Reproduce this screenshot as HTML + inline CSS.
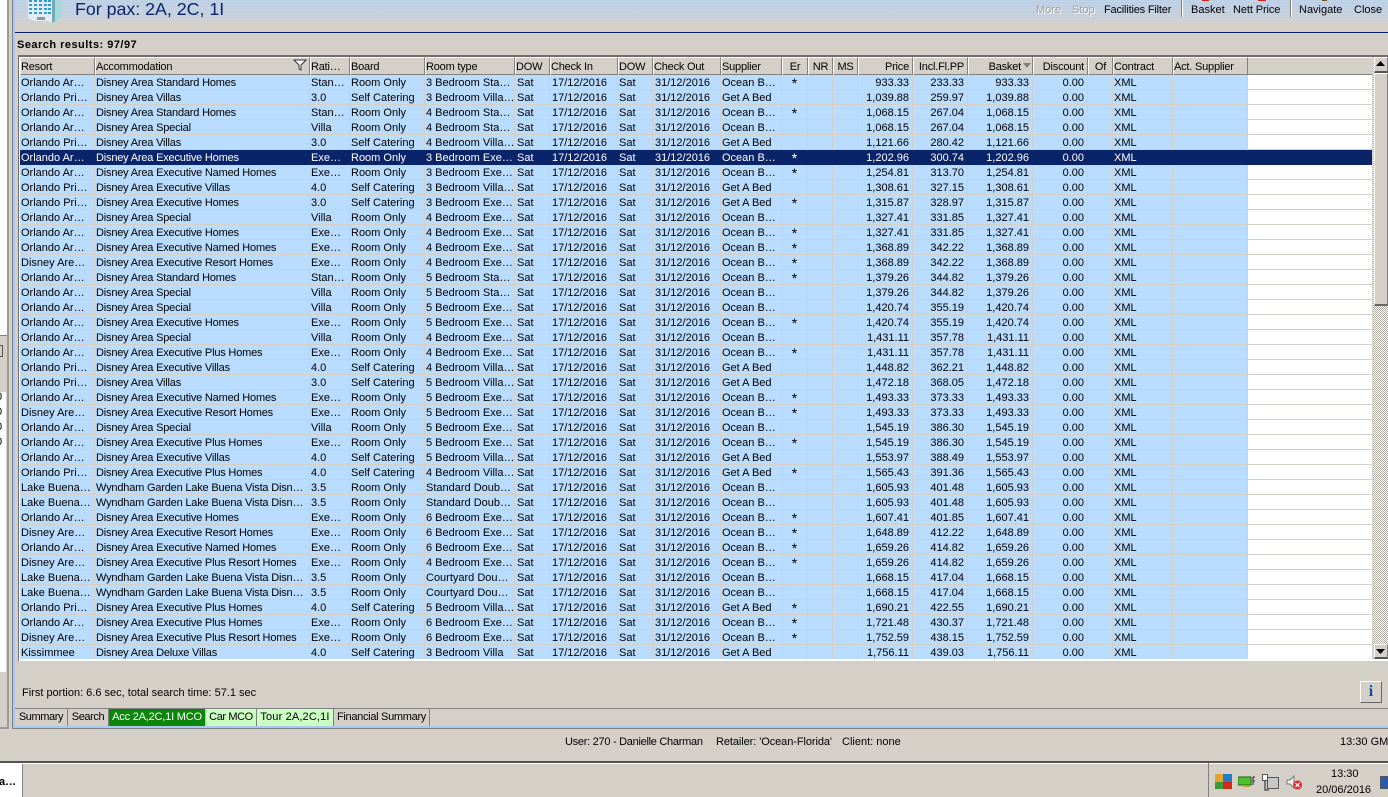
<!DOCTYPE html>
<html><head><meta charset="utf-8">
<style>
html,body{margin:0;padding:0;width:1388px;height:797px;overflow:hidden;background:#d4d0c8;font:11px "Liberation Sans",sans-serif;color:#000}
.a{position:absolute;white-space:nowrap}
table{position:absolute;left:20px;top:57px;border-collapse:separate;border-spacing:0;table-layout:fixed;width:1352px}
th{height:14px;padding:2px 0 0 0;background:#d4d0c8;font-weight:normal;text-align:left;border-top:1px solid #fff;border-left:1px solid #fff;border-right:1px solid #808080;border-bottom:1px solid #808080;overflow:hidden;white-space:nowrap;line-height:14px;letter-spacing:-.2px}
td{height:12px;padding:2px 0 0 1px;background:#b9dcff;border-right:1px solid #d4d0c8;border-bottom:1px solid #d4d0c8;overflow:hidden;white-space:nowrap;line-height:12px}
td:nth-child(2){letter-spacing:-.19px}
td:nth-child(6),td:nth-child(7),td:nth-child(9){padding-left:2px}
td:nth-child(n+14):nth-child(-n+17){text-align:right;padding:2px 3px 0 0}
th:nth-child(n+14):nth-child(-n+17){text-align:right;padding:2px 3px 0 0}
th:nth-child(16):nth-child(16):nth-child(16){padding-right:11px}
th:nth-child(n+11):nth-child(-n+13),th:nth-child(18),td:nth-child(n+11):nth-child(-n+13){text-align:center;padding:2px 0 0 0}
td:nth-child(11){font-size:14px}
td:last-child{background:#fff;border-right:0}
th:last-child{border-right:0;border-left:0}
tr.s td{background:#0a246a;color:#fff;border-color:#0a246a}
tr:last-child td{border-bottom:0}
.t{position:absolute;top:709px;height:17px;line-height:17px;text-align:center;border-right:1px solid #808080;box-sizing:border-box}
</style></head><body>

<!-- left strip -->
<div class="a" style="left:0;top:0;width:7px;height:335px;background:#fff"></div>
<div class="a" style="left:0;top:335px;width:7px;height:1px;background:#808080"></div>
<div class="a" style="left:0;top:345px;width:2px;height:10px;border:1px solid #555;border-left:0"></div>
<div class="a" style="left:0;top:392px;width:6px;height:280px;background:#fff"></div>
<div class="a" style="left:-4px;top:390px;line-height:15px;white-space:pre">0
0
0
0</div>
<div class="a" style="left:7px;top:0;width:2px;height:729px;background:#9a9a9a"></div>
<div class="a" style="left:0;top:727px;width:9px;height:2px;background:#9a9a9a"></div>
<div class="a" style="left:12px;top:0;width:1px;height:729px;background:#808080"></div>
<div class="a" style="left:13px;top:0;width:2px;height:727px;background:#a6caf0"></div>
<div class="a" style="left:13px;top:726px;width:1375px;height:2px;background:#a6caf0"></div>
<div class="a" style="left:12px;top:728px;width:1376px;height:1px;background:#808080"></div>

<!-- header band -->
<div class="a" style="left:15px;top:0;width:1373px;height:32px;background:repeating-linear-gradient(0deg,rgba(255,255,255,.05) 0 1px,rgba(0,0,0,0) 1px 3px),linear-gradient(#bcd0e6,#c6d0dc 50%,#d4d0c8 75%)"></div>
<div class="a" style="left:15px;top:32px;width:1373px;height:1px;background:#0a246a"></div>

<!-- building icon -->
<svg class="a" style="left:26px;top:0" width="38" height="24" viewBox="0 0 38 24">
<path d="M2 0H26V23L22 21H8L2 18Z" fill="#e2ecf2"/>
<path d="M26 0H36V17L26 23Z" fill="#a6d8de"/>
<path d="M26 0H29V21L26 23Z" fill="#74aab8"/>
<path d="M11 17H19V20H11Z" fill="#8a9aa2"/>
<g fill="#2a9be0">
<rect x="3" y="0" width="3" height="2"/><rect x="8" y="0" width="3" height="2"/><rect x="13" y="0" width="3" height="2"/><rect x="18" y="0" width="3" height="2"/><rect x="22" y="0" width="3" height="2"/>
<rect x="3" y="4" width="3" height="2"/><rect x="8" y="4" width="3" height="2"/><rect x="13" y="4" width="3" height="2"/><rect x="18" y="4" width="3" height="2"/><rect x="22" y="4" width="3" height="2"/>
<rect x="3" y="8" width="3" height="2"/><rect x="8" y="8" width="3" height="2"/><rect x="13" y="8" width="3" height="2"/><rect x="18" y="8" width="3" height="2"/><rect x="22" y="8" width="3" height="2"/>
<rect x="3" y="12" width="3" height="2"/><rect x="8" y="12" width="3" height="2"/><rect x="13" y="12" width="3" height="2"/><rect x="18" y="12" width="3" height="2"/><rect x="22" y="12" width="3" height="2"/>
</g></svg>

<div class="a" style="left:75px;top:-1px;font-size:17.8px;line-height:20px;color:#0a246a">For pax: 2A, 2C, 1I</div>

<!-- toolbar -->
<div class="a" style="left:1036px;top:4px;color:#a0a0a0;text-shadow:1px 1px 0 #fff">More</div>
<div class="a" style="left:1072px;top:4px;color:#a0a0a0;text-shadow:1px 1px 0 #fff">Stop</div>
<div class="a" style="left:1104px;top:4px;letter-spacing:-.18px">Facilities Filter</div>
<div class="a" style="left:1181px;top:0;width:1px;height:17px;background:#808080;border-right:1px solid #fff"></div>
<div class="a" style="left:1191px;top:4px">Basket</div>
<div class="a" style="left:1233px;top:4px;letter-spacing:-.1px">Nett Price</div>
<div class="a" style="left:1290px;top:0;width:1px;height:17px;background:#808080;border-right:1px solid #fff"></div>
<div class="a" style="left:1299px;top:4px">Navigate</div>
<div class="a" style="left:1354px;top:4px">Close</div>
<div class="a" style="left:1202px;top:0;width:7px;height:1px;background:#d02020"></div>
<div class="a" style="left:1258px;top:0;width:8px;height:1px;background:#d02020"></div>
<div class="a" style="left:1322px;top:0;width:5px;height:1px;background:#705030"></div>

<div class="a" style="left:17px;top:38px;font-weight:bold;line-height:14px;letter-spacing:.48px">Search results: 97/97</div>

<!-- grid frame -->
<div class="a" style="left:18px;top:55px;width:1370px;height:2px;background:#6f6f6f"></div>
<div class="a" style="left:18px;top:55px;width:1px;height:606px;background:#6f6f6f"></div>
<div class="a" style="left:19px;top:57px;width:1px;height:603px;background:#fff"></div>
<div class="a" style="left:19px;top:659px;width:1369px;height:2px;background:#fff"></div>

<table>
<colgroup><col style="width:75px"><col style="width:215px"><col style="width:40px"><col style="width:75px"><col style="width:90px"><col style="width:35px"><col style="width:68px"><col style="width:35px"><col style="width:68px"><col style="width:61px"><col style="width:26px"><col style="width:25px"><col style="width:25px"><col style="width:55px"><col style="width:55px"><col style="width:65px"><col style="width:55px"><col style="width:25px"><col style="width:60px"><col style="width:75px"><col></colgroup>
<tr><th>Resort<th>Accommodation<th>Rati…<th>Board<th>Room type<th>DOW<th>Check In<th>DOW<th>Check Out<th>Supplier<th>Er<th>NR<th>MS<th>Price<th>Incl.Fl.PP<th>Basket<th>Discount<th>Of<th>Contract<th>Act. Supplier<th></tr>
<tr><td>Orlando Ar…<td>Disney Area Standard Homes<td>Stan…<td>Room Only<td>3 Bedroom Sta…<td>Sat<td>17/12/2016<td>Sat<td>31/12/2016<td>Ocean B…<td>*<td><td><td>933.33<td>233.33<td>933.33<td>0.00<td><td>XML<td><td></tr>
<tr><td>Orlando Pri…<td>Disney Area Villas<td>3.0<td>Self Catering<td>3 Bedroom Villa…<td>Sat<td>17/12/2016<td>Sat<td>31/12/2016<td>Get A Bed<td><td><td><td>1,039.88<td>259.97<td>1,039.88<td>0.00<td><td>XML<td><td></tr>
<tr><td>Orlando Ar…<td>Disney Area Standard Homes<td>Stan…<td>Room Only<td>4 Bedroom Sta…<td>Sat<td>17/12/2016<td>Sat<td>31/12/2016<td>Ocean B…<td>*<td><td><td>1,068.15<td>267.04<td>1,068.15<td>0.00<td><td>XML<td><td></tr>
<tr><td>Orlando Ar…<td>Disney Area Special<td>Villa<td>Room Only<td>4 Bedroom Sta…<td>Sat<td>17/12/2016<td>Sat<td>31/12/2016<td>Ocean B…<td><td><td><td>1,068.15<td>267.04<td>1,068.15<td>0.00<td><td>XML<td><td></tr>
<tr><td>Orlando Pri…<td>Disney Area Villas<td>3.0<td>Self Catering<td>4 Bedroom Villa…<td>Sat<td>17/12/2016<td>Sat<td>31/12/2016<td>Get A Bed<td><td><td><td>1,121.66<td>280.42<td>1,121.66<td>0.00<td><td>XML<td><td></tr>
<tr class="s"><td>Orlando Ar…<td>Disney Area Executive Homes<td>Exe…<td>Room Only<td>3 Bedroom Exe…<td>Sat<td>17/12/2016<td>Sat<td>31/12/2016<td>Ocean B…<td>*<td><td><td>1,202.96<td>300.74<td>1,202.96<td>0.00<td><td>XML<td><td></tr>
<tr><td>Orlando Ar…<td>Disney Area Executive Named Homes<td>Exe…<td>Room Only<td>3 Bedroom Exe…<td>Sat<td>17/12/2016<td>Sat<td>31/12/2016<td>Ocean B…<td>*<td><td><td>1,254.81<td>313.70<td>1,254.81<td>0.00<td><td>XML<td><td></tr>
<tr><td>Orlando Pri…<td>Disney Area Executive Villas<td>4.0<td>Self Catering<td>3 Bedroom Villa…<td>Sat<td>17/12/2016<td>Sat<td>31/12/2016<td>Get A Bed<td><td><td><td>1,308.61<td>327.15<td>1,308.61<td>0.00<td><td>XML<td><td></tr>
<tr><td>Orlando Pri…<td>Disney Area Executive Homes<td>3.0<td>Self Catering<td>3 Bedroom Exe…<td>Sat<td>17/12/2016<td>Sat<td>31/12/2016<td>Get A Bed<td>*<td><td><td>1,315.87<td>328.97<td>1,315.87<td>0.00<td><td>XML<td><td></tr>
<tr><td>Orlando Ar…<td>Disney Area Special<td>Villa<td>Room Only<td>4 Bedroom Exe…<td>Sat<td>17/12/2016<td>Sat<td>31/12/2016<td>Ocean B…<td><td><td><td>1,327.41<td>331.85<td>1,327.41<td>0.00<td><td>XML<td><td></tr>
<tr><td>Orlando Ar…<td>Disney Area Executive Homes<td>Exe…<td>Room Only<td>4 Bedroom Exe…<td>Sat<td>17/12/2016<td>Sat<td>31/12/2016<td>Ocean B…<td>*<td><td><td>1,327.41<td>331.85<td>1,327.41<td>0.00<td><td>XML<td><td></tr>
<tr><td>Orlando Ar…<td>Disney Area Executive Named Homes<td>Exe…<td>Room Only<td>4 Bedroom Exe…<td>Sat<td>17/12/2016<td>Sat<td>31/12/2016<td>Ocean B…<td>*<td><td><td>1,368.89<td>342.22<td>1,368.89<td>0.00<td><td>XML<td><td></tr>
<tr><td>Disney Are…<td>Disney Area Executive Resort Homes<td>Exe…<td>Room Only<td>4 Bedroom Exe…<td>Sat<td>17/12/2016<td>Sat<td>31/12/2016<td>Ocean B…<td>*<td><td><td>1,368.89<td>342.22<td>1,368.89<td>0.00<td><td>XML<td><td></tr>
<tr><td>Orlando Ar…<td>Disney Area Standard Homes<td>Stan…<td>Room Only<td>5 Bedroom Sta…<td>Sat<td>17/12/2016<td>Sat<td>31/12/2016<td>Ocean B…<td>*<td><td><td>1,379.26<td>344.82<td>1,379.26<td>0.00<td><td>XML<td><td></tr>
<tr><td>Orlando Ar…<td>Disney Area Special<td>Villa<td>Room Only<td>5 Bedroom Sta…<td>Sat<td>17/12/2016<td>Sat<td>31/12/2016<td>Ocean B…<td><td><td><td>1,379.26<td>344.82<td>1,379.26<td>0.00<td><td>XML<td><td></tr>
<tr><td>Orlando Ar…<td>Disney Area Special<td>Villa<td>Room Only<td>5 Bedroom Exe…<td>Sat<td>17/12/2016<td>Sat<td>31/12/2016<td>Ocean B…<td><td><td><td>1,420.74<td>355.19<td>1,420.74<td>0.00<td><td>XML<td><td></tr>
<tr><td>Orlando Ar…<td>Disney Area Executive Homes<td>Exe…<td>Room Only<td>5 Bedroom Exe…<td>Sat<td>17/12/2016<td>Sat<td>31/12/2016<td>Ocean B…<td>*<td><td><td>1,420.74<td>355.19<td>1,420.74<td>0.00<td><td>XML<td><td></tr>
<tr><td>Orlando Ar…<td>Disney Area Special<td>Villa<td>Room Only<td>4 Bedroom Exe…<td>Sat<td>17/12/2016<td>Sat<td>31/12/2016<td>Ocean B…<td><td><td><td>1,431.11<td>357.78<td>1,431.11<td>0.00<td><td>XML<td><td></tr>
<tr><td>Orlando Ar…<td>Disney Area Executive Plus Homes<td>Exe…<td>Room Only<td>4 Bedroom Exe…<td>Sat<td>17/12/2016<td>Sat<td>31/12/2016<td>Ocean B…<td>*<td><td><td>1,431.11<td>357.78<td>1,431.11<td>0.00<td><td>XML<td><td></tr>
<tr><td>Orlando Pri…<td>Disney Area Executive Villas<td>4.0<td>Self Catering<td>4 Bedroom Villa…<td>Sat<td>17/12/2016<td>Sat<td>31/12/2016<td>Get A Bed<td><td><td><td>1,448.82<td>362.21<td>1,448.82<td>0.00<td><td>XML<td><td></tr>
<tr><td>Orlando Pri…<td>Disney Area Villas<td>3.0<td>Self Catering<td>5 Bedroom Villa…<td>Sat<td>17/12/2016<td>Sat<td>31/12/2016<td>Get A Bed<td><td><td><td>1,472.18<td>368.05<td>1,472.18<td>0.00<td><td>XML<td><td></tr>
<tr><td>Orlando Ar…<td>Disney Area Executive Named Homes<td>Exe…<td>Room Only<td>5 Bedroom Exe…<td>Sat<td>17/12/2016<td>Sat<td>31/12/2016<td>Ocean B…<td>*<td><td><td>1,493.33<td>373.33<td>1,493.33<td>0.00<td><td>XML<td><td></tr>
<tr><td>Disney Are…<td>Disney Area Executive Resort Homes<td>Exe…<td>Room Only<td>5 Bedroom Exe…<td>Sat<td>17/12/2016<td>Sat<td>31/12/2016<td>Ocean B…<td>*<td><td><td>1,493.33<td>373.33<td>1,493.33<td>0.00<td><td>XML<td><td></tr>
<tr><td>Orlando Ar…<td>Disney Area Special<td>Villa<td>Room Only<td>5 Bedroom Exe…<td>Sat<td>17/12/2016<td>Sat<td>31/12/2016<td>Ocean B…<td><td><td><td>1,545.19<td>386.30<td>1,545.19<td>0.00<td><td>XML<td><td></tr>
<tr><td>Orlando Ar…<td>Disney Area Executive Plus Homes<td>Exe…<td>Room Only<td>5 Bedroom Exe…<td>Sat<td>17/12/2016<td>Sat<td>31/12/2016<td>Ocean B…<td>*<td><td><td>1,545.19<td>386.30<td>1,545.19<td>0.00<td><td>XML<td><td></tr>
<tr><td>Orlando Ar…<td>Disney Area Executive Villas<td>4.0<td>Self Catering<td>5 Bedroom Villa…<td>Sat<td>17/12/2016<td>Sat<td>31/12/2016<td>Get A Bed<td><td><td><td>1,553.97<td>388.49<td>1,553.97<td>0.00<td><td>XML<td><td></tr>
<tr><td>Orlando Pri…<td>Disney Area Executive Plus Homes<td>4.0<td>Self Catering<td>4 Bedroom Villa…<td>Sat<td>17/12/2016<td>Sat<td>31/12/2016<td>Get A Bed<td>*<td><td><td>1,565.43<td>391.36<td>1,565.43<td>0.00<td><td>XML<td><td></tr>
<tr><td>Lake Buena…<td>Wyndham Garden Lake Buena Vista Disn…<td>3.5<td>Room Only<td>Standard Doub…<td>Sat<td>17/12/2016<td>Sat<td>31/12/2016<td>Ocean B…<td><td><td><td>1,605.93<td>401.48<td>1,605.93<td>0.00<td><td>XML<td><td></tr>
<tr><td>Lake Buena…<td>Wyndham Garden Lake Buena Vista Disn…<td>3.5<td>Room Only<td>Standard Doub…<td>Sat<td>17/12/2016<td>Sat<td>31/12/2016<td>Ocean B…<td><td><td><td>1,605.93<td>401.48<td>1,605.93<td>0.00<td><td>XML<td><td></tr>
<tr><td>Orlando Ar…<td>Disney Area Executive Homes<td>Exe…<td>Room Only<td>6 Bedroom Exe…<td>Sat<td>17/12/2016<td>Sat<td>31/12/2016<td>Ocean B…<td>*<td><td><td>1,607.41<td>401.85<td>1,607.41<td>0.00<td><td>XML<td><td></tr>
<tr><td>Disney Are…<td>Disney Area Executive Resort Homes<td>Exe…<td>Room Only<td>6 Bedroom Exe…<td>Sat<td>17/12/2016<td>Sat<td>31/12/2016<td>Ocean B…<td>*<td><td><td>1,648.89<td>412.22<td>1,648.89<td>0.00<td><td>XML<td><td></tr>
<tr><td>Orlando Ar…<td>Disney Area Executive Named Homes<td>Exe…<td>Room Only<td>6 Bedroom Exe…<td>Sat<td>17/12/2016<td>Sat<td>31/12/2016<td>Ocean B…<td>*<td><td><td>1,659.26<td>414.82<td>1,659.26<td>0.00<td><td>XML<td><td></tr>
<tr><td>Disney Are…<td>Disney Area Executive Plus Resort Homes<td>Exe…<td>Room Only<td>4 Bedroom Exe…<td>Sat<td>17/12/2016<td>Sat<td>31/12/2016<td>Ocean B…<td>*<td><td><td>1,659.26<td>414.82<td>1,659.26<td>0.00<td><td>XML<td><td></tr>
<tr><td>Lake Buena…<td>Wyndham Garden Lake Buena Vista Disn…<td>3.5<td>Room Only<td>Courtyard Dou…<td>Sat<td>17/12/2016<td>Sat<td>31/12/2016<td>Ocean B…<td><td><td><td>1,668.15<td>417.04<td>1,668.15<td>0.00<td><td>XML<td><td></tr>
<tr><td>Lake Buena…<td>Wyndham Garden Lake Buena Vista Disn…<td>3.5<td>Room Only<td>Courtyard Dou…<td>Sat<td>17/12/2016<td>Sat<td>31/12/2016<td>Ocean B…<td><td><td><td>1,668.15<td>417.04<td>1,668.15<td>0.00<td><td>XML<td><td></tr>
<tr><td>Orlando Pri…<td>Disney Area Executive Plus Homes<td>4.0<td>Self Catering<td>5 Bedroom Villa…<td>Sat<td>17/12/2016<td>Sat<td>31/12/2016<td>Get A Bed<td>*<td><td><td>1,690.21<td>422.55<td>1,690.21<td>0.00<td><td>XML<td><td></tr>
<tr><td>Orlando Ar…<td>Disney Area Executive Plus Homes<td>Exe…<td>Room Only<td>6 Bedroom Exe…<td>Sat<td>17/12/2016<td>Sat<td>31/12/2016<td>Ocean B…<td>*<td><td><td>1,721.48<td>430.37<td>1,721.48<td>0.00<td><td>XML<td><td></tr>
<tr><td>Disney Are…<td>Disney Area Executive Plus Resort Homes<td>Exe…<td>Room Only<td>6 Bedroom Exe…<td>Sat<td>17/12/2016<td>Sat<td>31/12/2016<td>Ocean B…<td>*<td><td><td>1,752.59<td>438.15<td>1,752.59<td>0.00<td><td>XML<td><td></tr>
<tr><td>Kissimmee<td>Disney Area Deluxe Villas<td>4.0<td>Self Catering<td>3 Bedroom Villa<td>Sat<td>17/12/2016<td>Sat<td>31/12/2016<td>Get A Bed<td><td><td><td>1,756.11<td>439.03<td>1,756.11<td>0.00<td><td>XML<td><td></tr>
</table>

<!-- filter + sort icons -->
<svg class="a" style="left:293px;top:59px" width="14" height="12" viewBox="0 0 14 12"><path d="M1 1H13L8 6V11L6 10V6Z" fill="#fff" stroke="#333" stroke-width="1"/></svg>
<svg class="a" style="left:1023px;top:63px" width="8" height="5"><path d="M0 0H8L4 5Z" fill="#808080"/></svg>

<!-- scrollbar -->
<div class="a" style="left:1373px;top:57px;width:15px;height:588px;background:repeating-conic-gradient(#fff 0 25%,#b0aca4 0 50%) 0 0/2px 2px"></div>
<div class="a" style="left:1374px;top:57px;width:12px;height:13px;background:#d4d0c8;border:1px solid #fff;border-right-color:#808080;border-bottom:2px solid #555"></div>
<svg class="a" style="left:1376px;top:61px" width="9" height="6"><path d="M4.5 0L9 5H0Z" fill="#000"/></svg>
<div class="a" style="left:1374px;top:73px;width:12px;height:230px;background:#d4d0c8;border:1px solid #fff;border-right:2px solid #808080;border-bottom:2px solid #666"></div>
<div class="a" style="left:1374px;top:644px;width:12px;height:12px;background:#d4d0c8;border:1px solid #fff;border-right-color:#808080;border-bottom:2px solid #555"></div>
<svg class="a" style="left:1376px;top:649px" width="9" height="6"><path d="M0 0H9L4.5 5Z" fill="#000"/></svg>

<div class="a" style="left:22px;top:686px;line-height:14px">First portion: 6.6 sec, total search time: 57.1 sec</div>

<!-- info button -->
<div class="a" style="left:1360px;top:681px;width:20px;height:20px;background:#d4d0c8;border:1px solid #fff;border-right-color:#666;border-bottom-color:#666;text-align:center;font:bold 16px/20px 'Liberation Serif',serif;color:#0a50a0">i</div>

<!-- tabs -->
<div class="a" style="left:15px;top:708px;width:1373px;height:1px;background:#808080"></div>
<div class="t" style="left:15px;width:53px;letter-spacing:-.4px">Summary</div>
<div class="t" style="left:68px;width:41px;letter-spacing:-.4px">Search</div>
<div class="t" style="left:109px;width:97px;background:#0b860b;color:#fff;border-right:1px solid #c0c0c0;letter-spacing:-.2px">Acc 2A,2C,1I MCO</div>
<div class="t" style="left:206px;width:51px;background:#ccffc4;letter-spacing:-.4px">Car MCO</div>
<div class="t" style="left:257px;width:77px;background:#ccffc4;letter-spacing:.15px">Tour 2A,2C,1I</div>
<div class="t" style="left:334px;width:96px;letter-spacing:-.3px">Financial Summary</div>

<!-- status -->
<div class="a" style="left:565px;top:735px;line-height:14px;letter-spacing:-.28px">User: 270 - Danielle Charman</div>
<div class="a" style="left:716px;top:735px;line-height:14px;letter-spacing:-.08px">Retailer: 'Ocean-Florida'</div>
<div class="a" style="left:842px;top:735px;line-height:14px">Client: none</div>
<div class="a" style="left:1340px;top:735px;line-height:14px">13:30 GMT</div>

<!-- taskbar -->
<div class="a" style="left:0;top:761px;width:1388px;height:2px;background:#555"></div>
<div class="a" style="left:0;top:763px;width:1388px;height:1px;background:#fff"></div>
<div class="a" style="left:0;top:764px;width:22px;height:33px;background:#fff;border-right:1px solid #888"></div>
<div class="a" style="left:-1px;top:775px;font-weight:bold;line-height:14px">a…</div>
<div class="a" style="left:1208px;top:763px;width:1px;height:34px;background:#808080"></div>

<svg class="a" style="left:1215px;top:774px" width="18" height="16" viewBox="0 0 18 16"><rect x="0" y="0" width="8" height="8" fill="#e8a030"/><rect x="8" y="0" width="9" height="8" fill="#1f80c8"/><rect x="0" y="8" width="8" height="7" fill="#3c9a3c"/><rect x="8" y="8" width="9" height="7" fill="#d02a1a"/></svg>
<svg class="a" style="left:1238px;top:776px" width="18" height="12" viewBox="0 0 18 12"><rect x="0" y="1" width="13" height="8" fill="#50c030" stroke="#206010"/><rect x="5" y="9" width="7" height="2" fill="#c0a020"/><path d="M15 1H17M15 1V9M15 5H17" stroke="#222" fill="none"/></svg>
<svg class="a" style="left:1262px;top:774px" width="18" height="17" viewBox="0 0 18 17"><rect x="5.500" y="3.500" width="11" height="11" fill="#c8c8c8" stroke="#555"/><rect x="0.500" y="0.500" width="5" height="6" fill="#fff" stroke="#555"/><path d="M3 7V16H7" fill="none" stroke="#555" stroke-width="1.500"/></svg>
<svg class="a" style="left:1286px;top:775px" width="18" height="16" viewBox="0 0 18 16"><path d="M1 5H4L8 1V13L4 9H1Z" fill="#f0f0f0" stroke="#777"/><circle cx="11.500" cy="10" r="4.500" fill="#e03030"/><path d="M9.500 8L13.500 12M13.500 8L9.500 12" stroke="#fff" stroke-width="1.200"/></svg>

<div class="a" style="left:1331px;top:767px;line-height:14px">13:30</div>
<div class="a" style="left:1316px;top:783px;line-height:14px">20/06/2016</div>
<div class="a" style="left:1380px;top:776px;width:8px;height:13px;background:#2a5ab0;border:1px solid #555;box-sizing:border-box"></div>
</body></html>
